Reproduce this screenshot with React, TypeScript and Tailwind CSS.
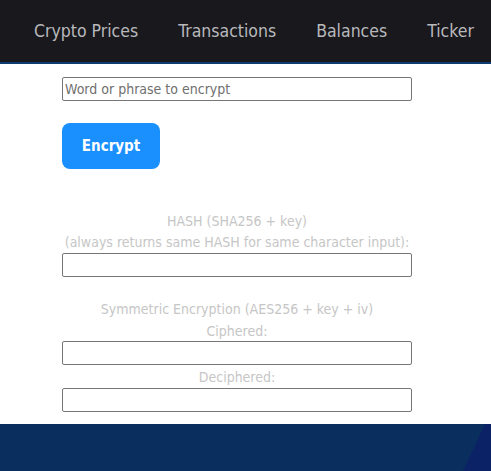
const navItems = ["Crypto Prices", "Transactions", "Balances", "Ticker"];

const Field = () => (
  <div className="h-6 w-full border border-[#767676] rounded-[2px] bg-white" />
);

export default function App() {
  return (
    <div className="min-h-[471px] w-[491px] overflow-hidden bg-white font-['DejaVu_Sans_Condensed','DejaVu_Sans',sans-serif]">
      <nav className="flex h-16 items-center whitespace-nowrap bg-[#18181d] pl-[14px] text-[17.5px] text-[#b9b9bc] border-b-2 border-[#0f3c70]">
        {navItems.map((item) => (
          <a key={item} className="px-5">
            {item}
          </a>
        ))}
      </nav>

      <main className="ml-[62px] w-[350px] pt-[13px] pb-[12px]">
        <input
          placeholder="Word or phrase to encrypt"
          className="h-6 w-full rounded-[2px] border border-[#767676] px-[2px] text-[14px] text-[#333] placeholder:text-[#6f6f6f] outline-none"
        />
        <button className="mt-[22px] h-[46px] w-[98px] rounded-[8px] bg-[#1a90ff] text-[15px] font-bold text-white">
          Encrypt
        </button>

        <div className="mt-[42px] text-center text-[14px] leading-[21px] text-[#c6c6c6]">
          <p>HASH (SHA256 + key)</p>
          <p>(always returns same HASH for same character input):</p>
        </div>
        <Field />

        <div className="mt-[21px] text-center text-[14px] leading-[22px] text-[#c6c6c6]">
          <p>Symmetric Encryption (AES256 + key + iv)</p>
          <p>Ciphered:</p>
        </div>
        <div className="-mt-px">
          <Field />
        </div>
        <p className="mt-[1px] text-center text-[14px] leading-[22px] text-[#c6c6c6]">
          Deciphered:
        </p>
        <Field />
      </main>

      <footer className="relative h-[60px] bg-[#0a2f5f]">
        <svg className="absolute right-0 top-0 h-full w-[40px]" viewBox="0 0 40 60" preserveAspectRatio="none">
          <polygon points="34,0 40,0 40,60 6,60" fill="#0b2266" />
        </svg>
      </footer>
    </div>
  );
}
